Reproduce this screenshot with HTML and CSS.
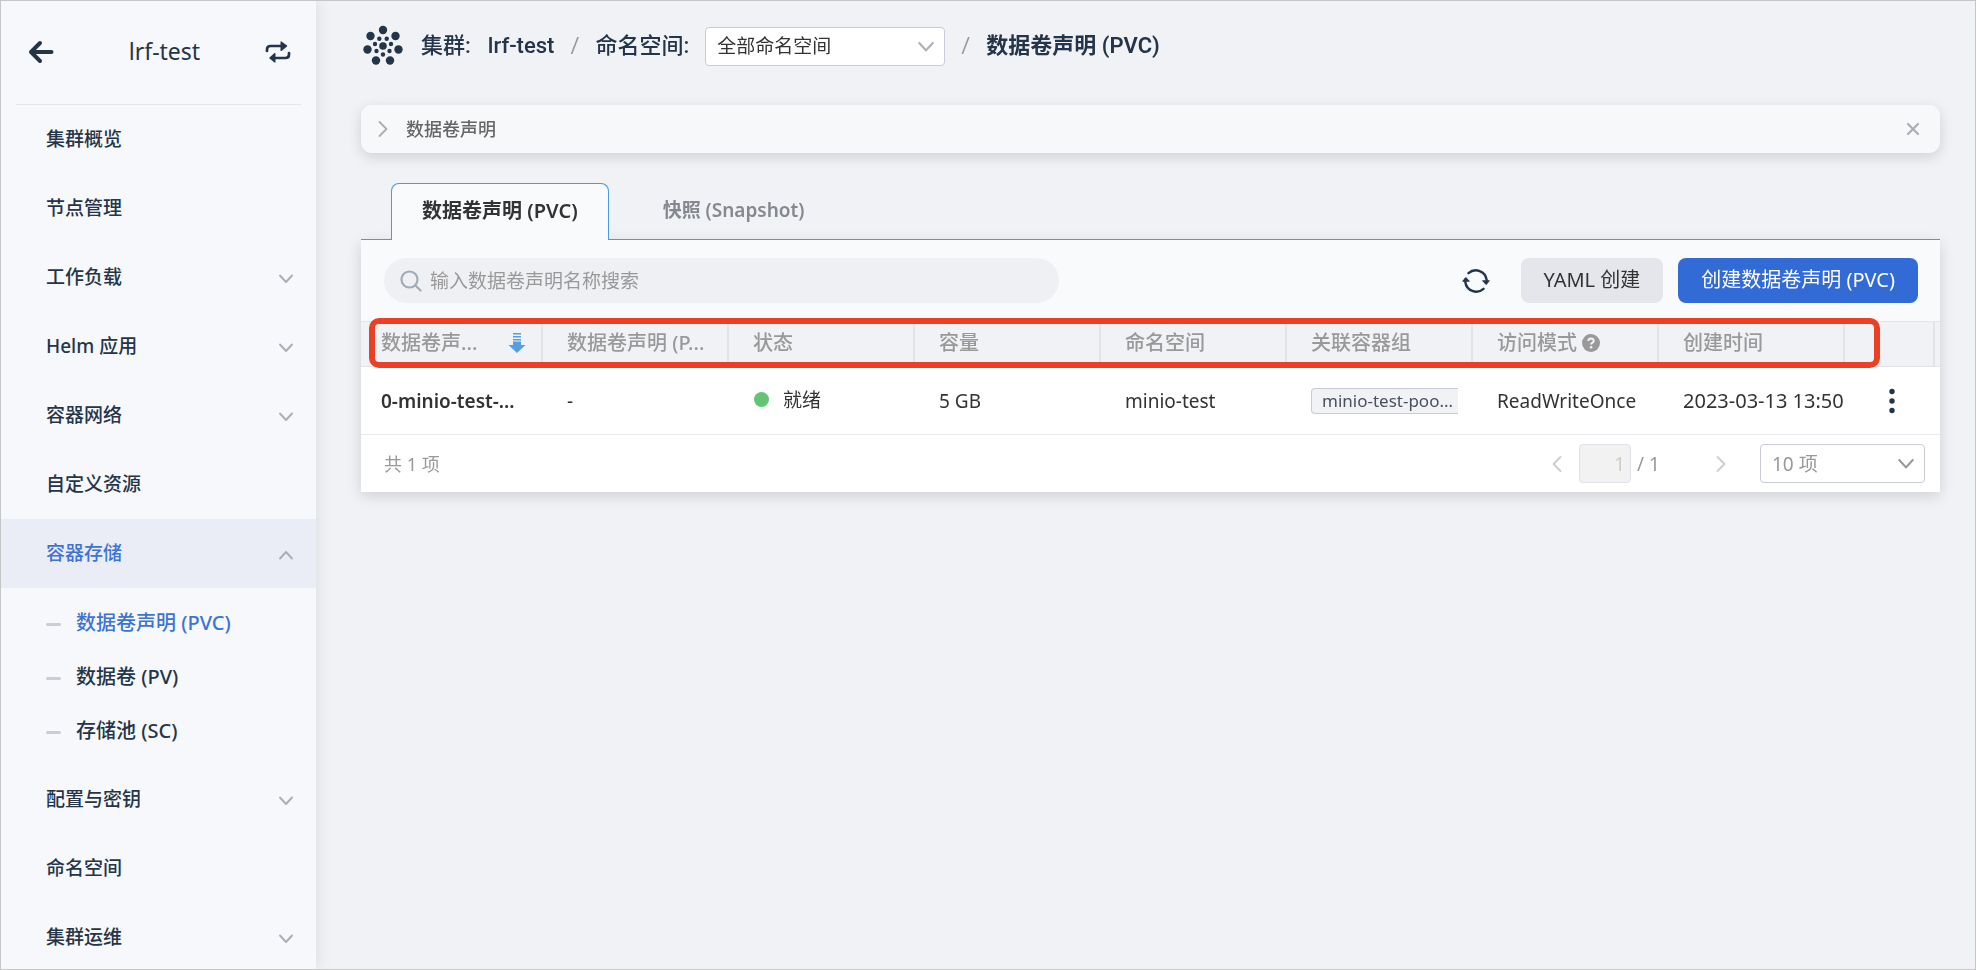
FILE: index.html
```html
<!DOCTYPE html>
<html lang="zh-CN">
<head>
<meta charset="utf-8">
<meta name="viewport" content="width=device-width, initial-scale=1">
<title>数据卷声明 (PVC)</title>
<link rel="stylesheet" href="styles.css">
</head>
<body>
<svg class="defs" aria-hidden="true">
  <symbol id="chev-down" viewBox="0 0 16 16"><path d="M2 4.5l6 6.500 6-6.500" fill="none" stroke="currentColor" stroke-width="1.900" stroke-linecap="round" stroke-linejoin="round"/></symbol>
  <symbol id="chev-right" viewBox="0 0 16 18"><path d="M4.500 2l7 7-7 7" fill="none" stroke="currentColor" stroke-width="1.800" stroke-linecap="round" stroke-linejoin="round"/></symbol>
</svg>
<div class="app">
  <aside class="sidebar">
    <div class="side-head">
      <button class="icon-btn" aria-label="返回">
        <svg width="26" height="24" viewBox="0 0 26 24" fill="none" stroke="currentColor" stroke-width="4" stroke-linecap="round" stroke-linejoin="round"><path d="M12 3L3 12l9 9M4 12h19.500"/></svg>
      </button>
      <span class="side-title">lrf-test</span>
      <button class="icon-btn" aria-label="切换">
        <svg width="26" height="24" viewBox="0 0 26 24"><g fill="none" stroke="currentColor" stroke-width="2.700" stroke-linecap="round"><path d="M2 11V9.500Q2 6 5.500 6H17"/><path d="M24 13v1.500Q24 18 20.500 18H9"/></g><path d="M15.500 2q0-1 1-.6L22 5.400q.6.600 0 1.200L16.500 11q-1 .3-1-.8zM10.500 22q0 1-1 .6L4.500 18.600q-.6-.6 0-1.200L9.500 13q1-.3 1 .8z" fill="currentColor"/></svg>
      </button>
    </div>
    <nav class="menu">
      <a class="item" href="#">集群概览</a>
      <a class="item" href="#">节点管理</a>
      <button class="item">工作负载<svg class="chev"><use href="#chev-down"/></svg></button>
      <button class="item">Helm 应用<svg class="chev"><use href="#chev-down"/></svg></button>
      <button class="item">容器网络<svg class="chev"><use href="#chev-down"/></svg></button>
      <a class="item" href="#">自定义资源</a>
      <button class="item active" aria-expanded="true">容器存储<svg class="chev up"><use href="#chev-down"/></svg></button>
      <div class="submenu">
        <a class="subitem current" href="#">数据卷声明 (PVC)</a>
        <a class="subitem" href="#">数据卷 (PV)</a>
        <a class="subitem" href="#">存储池 (SC)</a>
      </div>
      <button class="item">配置与密钥<svg class="chev"><use href="#chev-down"/></svg></button>
      <a class="item" href="#">命名空间</a>
      <button class="item">集群运维<svg class="chev"><use href="#chev-down"/></svg></button>
    </nav>
  </aside>
  <main class="main">
    <header class="crumbs">
      <svg class="logo" width="42" height="42" viewBox="0 0 42 42" fill="currentColor"><circle cx="22" cy="5" r="4.200"/><circle cx="9.500" cy="11" r="4.200"/><circle cx="34.500" cy="11" r="4.200"/><circle cx="6.500" cy="24.500" r="4.200"/><circle cx="37.500" cy="24.500" r="4.200"/><circle cx="15" cy="35.500" r="4.200"/><circle cx="29" cy="35.500" r="4.200"/><circle cx="22" cy="21" r="3.800"/><circle cx="18.300" cy="13.700" r="2.200"/><circle cx="25.700" cy="13.700" r="2.200"/><circle cx="14" cy="19" r="2.200"/><circle cx="30" cy="19" r="2.200"/><circle cx="15.500" cy="26" r="2.200"/><circle cx="28.500" cy="26" r="2.200"/><circle cx="22" cy="29.500" r="2.200"/></svg>
      <span>集群:</span>
      <a class="crumb-link" href="#">lrf-test</a>
      <span class="slash">/</span>
      <label for="ns">命名空间:</label>
      <span class="select-wrap ns">
        <select id="ns"><option>全部命名空间</option></select>
        <svg class="arrow"><use href="#chev-down"/></svg>
      </span>
      <span class="slash">/</span>
      <h1 class="page-title">数据卷声明 (PVC)</h1>
    </header>

    <section class="notice">
      <button class="notice-toggle"><svg width="16" height="18"><use href="#chev-right"/></svg>数据卷声明</button>
      <button class="icon-btn notice-close" aria-label="关闭"><svg width="14" height="14" viewBox="0 0 14 14" fill="none" stroke="currentColor" stroke-width="2.200" stroke-linecap="round"><path d="M2 2l10 10M12 2L2 12"/></svg></button>
    </section>

    <div class="tabs" role="tablist">
      <button class="tab selected" role="tab" aria-selected="true">数据卷声明 (PVC)</button>
      <button class="tab" role="tab" aria-selected="false">快照 (Snapshot)</button>
    </div>

    <section class="panel">
      <div class="toolbar">
        <label class="search">
          <svg width="22" height="22" viewBox="0 0 22 22" fill="none" stroke="currentColor" stroke-width="2.200" stroke-linecap="round"><circle cx="9.500" cy="9.500" r="8"/><path d="M15.500 15.500l5 5"/></svg>
          <input type="search" aria-label="搜索" placeholder="输入数据卷声明名称搜索">
        </label>
        <div class="actions">
          <button class="icon-btn refresh" aria-label="刷新"><svg width="28" height="26" viewBox="0 0 28 26"><g fill="none" stroke="currentColor" stroke-width="2.400" stroke-linecap="round"><path d="M6.500 5.200A11 11 0 0 1 24.700 12"/><path d="M21.500 20.800A11 11 0 0 1 3.300 14"/></g><path d="M20.500 12.300h7q.5.300.1.800L24.800 16.500q-.6.600-1.200 0L20.300 13q-.3-.5.200-.700zM.5 13.700h7q.5-.3.100-.8L4.400 9.500q-.6-.6-1.200 0L.4 13q-.3.500.1.700z" fill="currentColor"/></svg></button>
          <button class="btn">YAML 创建</button>
          <button class="btn primary">创建数据卷声明 (PVC)</button>
        </div>
      </div>
      <div class="table-wrap">
        <table>
          <colgroup><col class="c-name"><col><col><col><col><col><col><col><col class="c-menu"><col class="c-end"></colgroup>
          <thead>
            <tr>
              <th><div class="sort">数据卷声...<svg width="18" height="22" viewBox="0 0 18 22" fill="#549fe4"><path d="M5 1h8v1.500H5zM5 4h8v1.500H5zM5 7h8v1.500H5zM5 9.500h8v3.500h4.500L9 21 .5 13H5z"/></svg></div></th>
              <th>数据卷声明 (P...</th>
              <th>状态</th>
              <th>容量</th>
              <th>命名空间</th>
              <th>关联容器组</th>
              <th><div class="help">访问模式<svg width="18" height="18" viewBox="0 0 18 18"><circle cx="9" cy="9" r="9" fill="currentColor"/><path d="M6.300 7Q6.500 4.600 9.100 4.600 11.700 4.700 11.700 6.900 11.600 8.200 10.200 8.900 9.100 9.500 9.100 10.600" fill="none" stroke="#f1f2f6" stroke-width="2"/><circle cx="9.100" cy="13.300" r="1.300" fill="#f1f2f6"/></svg></div></th>
              <th>创建时间</th>
              <th></th>
              <th></th>
            </tr>
          </thead>
          <tbody>
            <tr>
              <td><a class="name" href="#">0-minio-test-...</a></td>
              <td>-</td>
              <td><div class="status"><i class="dot"></i>就绪</div></td>
              <td>5 GB</td>
              <td>minio-test</td>
              <td class="tag-cell"><span class="tag">minio-test-poo...</span></td>
              <td>ReadWriteOnce</td>
              <td class="time">2023-03-13 13:50</td>
              <td class="menu-cell"><button class="icon-btn" aria-label="更多"><svg width="6" height="26" viewBox="0 0 6 26" fill="currentColor"><circle cx="3" cy="3.500" r="2.700"/><circle cx="3" cy="13" r="2.700"/><circle cx="3" cy="22.500" r="2.700"/></svg></button></td>
              <td></td>
            </tr>
          </tbody>
        </table>
        <div class="highlight"></div>
      </div>
      <footer class="pager">
        <span class="count">共 1 项</span>
        <div class="pages">
          <button class="icon-btn page-arrow" aria-label="上一页" disabled><svg class="flip" width="16" height="18"><use href="#chev-right"/></svg></button>
          <input class="page-no" type="text" value="1" aria-label="页码" disabled>
          <span class="total">/ 1</span>
          <button class="icon-btn page-arrow" aria-label="下一页" disabled><svg width="16" height="18"><use href="#chev-right"/></svg></button>
          <span class="select-wrap size">
            <select aria-label="每页条数"><option>10 项</option></select>
            <svg class="arrow"><use href="#chev-down"/></svg>
          </span>
        </div>
      </footer>
    </section>
  </main>
</div>
</body>
</html>
```

FILE: styles.css
```css
* { box-sizing: border-box; }

body {
  margin: 0;
  color: #333;
  background: #f1f2f6;
  font: 19px/28px "Noto Sans", "Noto Sans CJK SC", sans-serif;
}

button, input, select { font: inherit; color: inherit; margin: 0; }
button { border: 0; padding: 0; background: none; cursor: pointer; }
a { color: inherit; text-decoration: none; }
svg { display: block; flex: none; }
.defs { position: absolute; width: 0; height: 0; }

.app {
  display: flex;
  height: 100vh;
  border: 1px solid #c6c6c6;
  overflow: hidden;
}

.icon-btn { display: flex; align-items: center; justify-content: center; color: #253549; }

/* Sidebar */
.sidebar {
  flex: none;
  width: 315px;
  overflow-y: auto;
  scrollbar-width: none;
  background: #f7f8fc;
  color: #253549;
  box-shadow: 0 0 16px rgba(0, 0, 0, 0.1);
}
.side-head {
  display: flex;
  align-items: center;
  justify-content: space-between;
  height: 104px;
  margin: 0 15px;
  padding: 0 10px 2px 12px;
  border-bottom: 1px solid #e4e6ea;
}
.side-title { padding: 0 0 2px 10px; font-size: 23px; }
.item {
  display: flex;
  align-items: center;
  justify-content: space-between;
  width: 100%;
  height: 69px;
  padding: 0 22px 2px 45px;
  font-size: 19px;
  font-weight: 500;
  text-align: left;
}
.item.active { background: #ebedf6; color: #3d74d1; }
.chev { width: 16px; height: 16px; margin-top: 4px; color: #a9aeb5; }
.chev.up { transform: rotate(180deg); }
.submenu { padding: 9px 0 6px; }
.subitem {
  display: flex;
  align-items: center;
  gap: 15px;
  height: 54px;
  padding: 0 0 2px 45px;
  font-size: 20px;
  font-weight: 500;
}
.subitem::before {
  content: "";
  width: 15px;
  height: 3px;
  margin-top: 2px;
  border-radius: 2px;
  background: #cbcdd5;
}
.subitem.current { color: #3d74d1; }

/* Main column */
.main { flex: 1; min-width: 0; padding: 24px 35px 0 45px; }

.crumbs {
  display: flex;
  align-items: center;
  height: 42px;
  color: #253549;
  font: 500 22px/32px Roboto, "Noto Sans CJK SC", sans-serif;
}
.logo { margin-right: 18px; }
.crumb-link { margin-left: 17px; }
.slash { margin: 0 16px; color: #999; font-weight: 400; }
.page-title { margin: 0; font: inherit; font-weight: 600; }
.select-wrap { position: relative; display: block; }
.select-wrap select {
  display: block;
  width: 100%;
  height: 39px;
  padding: 0 40px 0 11px;
  border: 1px solid #c9ccd6;
  border-radius: 4px;
  background: #fff;
  appearance: none;
}
.arrow {
  position: absolute;
  top: 11px;
  right: 10px;
  width: 18px;
  height: 18px;
  color: #a9b0b8;
  pointer-events: none;
}
.ns { width: 240px; margin-left: 16px; color: #333; font: 19px/28px "Noto Sans", "Noto Sans CJK SC", sans-serif; }

.notice {
  display: flex;
  align-items: center;
  justify-content: space-between;
  height: 48px;
  margin-top: 38px;
  padding: 0 20px 0 14px;
  border-radius: 11px;
  background: #f7f8fa;
  box-shadow: 0 4px 14px rgba(0, 0, 0, 0.14);
}
.notice-toggle {
  display: flex;
  align-items: center;
  gap: 15px;
  color: #666;
  font-size: 18px;
  font-weight: 500;
}
.notice-toggle svg { color: #a9aeb5; }
.notice-close { color: #a9aeb5; }

.tabs {
  display: flex;
  position: relative;
  z-index: 1;
  margin-top: 30px;
  padding-left: 30px;
  border-bottom: 1px solid #4a9bdc;
}
.tab {
  height: 56px;
  padding: 0 54px 2px;
  color: #85898f;
  font-weight: 600;
}
.tab.selected {
  height: 57px;
  margin-bottom: -1px;
  padding: 0 30px 2px;
  border: 1px solid #4a9bdc;
  border-bottom: 0;
  border-radius: 8px 8px 0 0;
  background: #f9fafc;
  color: #333;
  font-size: 20px;
}

.panel { background: #fff; box-shadow: 0 4px 14px rgba(0, 0, 0, 0.14); }
.toolbar {
  display: flex;
  align-items: center;
  justify-content: space-between;
  height: 81px;
  padding: 0 22px 0 23px;
  background: #f9fafc;
}
.search {
  display: flex;
  align-items: center;
  gap: 8px;
  width: 44%;
  height: 45px;
  padding: 0 16px;
  border-radius: 23px;
  background: #eff0f4;
  color: #a3abb5;
}
.search input {
  flex: 1;
  min-width: 0;
  padding: 0;
  border: 0;
  outline: 0;
  background: none;
  color: #333;
}
.search input::placeholder { color: #999; opacity: 1; }
.actions { display: flex; align-items: center; gap: 15px; }
.refresh { margin-right: 16px; }
.btn {
  height: 45px;
  padding: 0 23px 2px;
  border-radius: 8px;
  background: #e5e6eb;
  color: #333;
  font-size: 20px;
}
.btn.primary { background: #336bd6; color: #fff; }

/* Table */
.table-wrap { position: relative; }
table { width: 100%; border-collapse: separate; border-spacing: 0; table-layout: fixed; }
.c-name { width: 182px; }
.c-menu { width: 90px; }
.c-end { width: 5px; }
th, td { padding: 0 15px 0 24px; text-align: left; white-space: nowrap; }
th:first-child, td:first-child { padding-left: 20px; }
th:last-child, td:last-child { padding: 0; }
th {
  height: 46px;
  padding-bottom: 2px;
  border: solid #e3e4e8;
  border-width: 1px 2px 1px 0;
  background: #f1f2f6;
  color: #999;
  font-size: 20px;
  font-weight: 500;
}
th:last-child { border-right: 0; }
td { height: 68px; border-bottom: 1px solid #e8eaec; }
.sort { display: flex; align-items: center; justify-content: space-between; }
.help { display: flex; align-items: center; gap: 5px; }
.name { font-weight: 600; }
.status { display: flex; align-items: center; gap: 14px; padding: 0 0 2px 1px; }
.dot { width: 15px; height: 15px; border-radius: 50%; background: #62c575; }
.tag-cell { overflow: hidden; }
.tag {
  display: block;
  height: 26px;
  padding: 0 0 0 10px;
  overflow: hidden;
  border: 1px solid #c9ccd6;
  border-right: 0;
  border-radius: 4px 0 0 4px;
  background: #f1f2f6;
  color: #4a4f5c;
  font-size: 17px;
  line-height: 24px;
}
td.time { padding-right: 0; font-size: 20px; }
td.menu-cell { padding: 0 0 0 44px; }
.highlight {
  position: absolute;
  top: -3px;
  left: 8px;
  right: 60px;
  height: 50px;
  border: 6px solid #eb4026;
  border-radius: 10px;
  pointer-events: none;
}

.pager {
  display: flex;
  align-items: center;
  justify-content: space-between;
  height: 57px;
  padding: 0 15px 0 23px;
  color: #999;
}
.count { font-size: 18px; }
.pages { display: flex; align-items: center; }
.page-arrow { color: #ccc; }
.page-arrow .flip { transform: rotate(180deg); }
.page-no {
  width: 52px;
  height: 39px;
  margin: 0 6px 0 14px;
  padding: 0 5px;
  border: 1px solid #e0e1e6;
  border-radius: 4px;
  background: #f2f2f2;
  color: #ccc;
  text-align: right;
}
.total { margin-right: 53px; }
.size { width: 165px; margin-left: 31px; }
.size .arrow { color: #999; }
```
